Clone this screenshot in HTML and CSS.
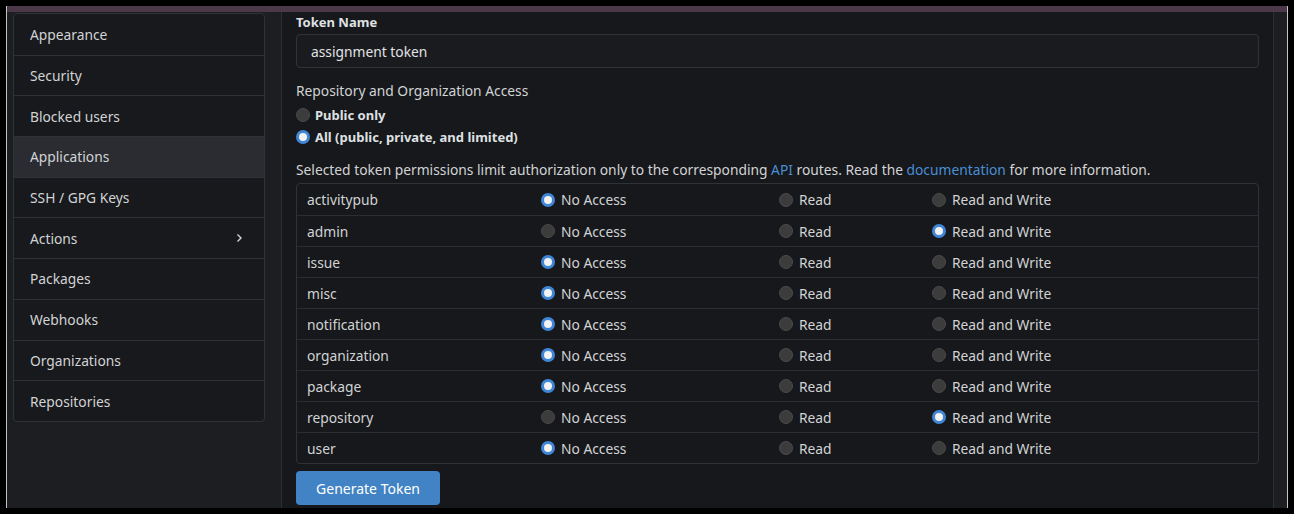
FILE: index.html
```html
<!DOCTYPE html>
<html lang="en">
<head>
<meta charset="utf-8">
<title>Applications</title>
<link rel="stylesheet" href="styles.css">
</head>
<body>
<div class="frame">
  <div class="topbar"></div>
  <div class="page">
    <aside class="side">
      <nav class="menu">
        <a class="item">Appearance</a>
        <a class="item">Security</a>
        <a class="item">Blocked users</a>
        <a class="item active">Applications</a>
        <a class="item">SSH / GPG Keys</a>
        <a class="item">Actions <svg class="chev" width="10" height="10" viewBox="0 0 10 10"><path d="M3.5 1.5 L7 5 L3.5 8.5" fill="none" stroke="#d4d4d4" stroke-width="1.4"/></svg></a>
        <a class="item">Packages</a>
        <a class="item">Webhooks</a>
        <a class="item">Organizations</a>
        <a class="item">Repositories</a>
      </nav>
    </aside>
    <main class="main">
      <label class="field-label">Token Name</label>
      <div class="input">assignment token</div>
      <div class="heading">Repository and Organization Access</div>
      <div class="choices">
        <label class="choice"><input type="radio" name="scope"> Public only</label>
        <label class="choice"><input type="radio" name="scope" checked> All (public, private, and limited)</label>
      </div>
      <p class="help">Selected token permissions limit authorization only to the corresponding <a>API</a> routes. Read the <a>documentation</a> for more information.</p>
      <div class="perms">
        <div class="row"><span class="name">activitypub</span><label><input type="radio" name="p1" checked> No Access</label><label><input type="radio" name="p1"> Read</label><label><input type="radio" name="p1"> Read and Write</label></div>
        <div class="row"><span class="name">admin</span><label><input type="radio" name="p2"> No Access</label><label><input type="radio" name="p2"> Read</label><label><input type="radio" name="p2" checked> Read and Write</label></div>
        <div class="row"><span class="name">issue</span><label><input type="radio" name="p3" checked> No Access</label><label><input type="radio" name="p3"> Read</label><label><input type="radio" name="p3"> Read and Write</label></div>
        <div class="row"><span class="name">misc</span><label><input type="radio" name="p4" checked> No Access</label><label><input type="radio" name="p4"> Read</label><label><input type="radio" name="p4"> Read and Write</label></div>
        <div class="row"><span class="name">notification</span><label><input type="radio" name="p5" checked> No Access</label><label><input type="radio" name="p5"> Read</label><label><input type="radio" name="p5"> Read and Write</label></div>
        <div class="row"><span class="name">organization</span><label><input type="radio" name="p6" checked> No Access</label><label><input type="radio" name="p6"> Read</label><label><input type="radio" name="p6"> Read and Write</label></div>
        <div class="row"><span class="name">package</span><label><input type="radio" name="p7" checked> No Access</label><label><input type="radio" name="p7"> Read</label><label><input type="radio" name="p7"> Read and Write</label></div>
        <div class="row"><span class="name">repository</span><label><input type="radio" name="p8"> No Access</label><label><input type="radio" name="p8"> Read</label><label><input type="radio" name="p8" checked> Read and Write</label></div>
        <div class="row"><span class="name">user</span><label><input type="radio" name="p9" checked> No Access</label><label><input type="radio" name="p9"> Read</label><label><input type="radio" name="p9"> Read and Write</label></div>
      </div>
      <button class="btn">Generate Token</button>
    </main>
  </div>
</div>
</body>
</html>
```
FILE: styles.css
```css
* { box-sizing: border-box; }
html, body { margin: 0; padding: 0; }
body {
  background: #000;
  width: 1294px;
  height: 514px;
  overflow: hidden;
  font-family: "Noto Sans", "Open Sans", sans-serif;
  font-size: 13.8px;
  color: #d2d3d5;
}
.frame {
  margin: 6px 0 0 6px;
  width: 1282px;
  height: 502px;
  border-left: 1px solid #c4c4c4;
  border-right: 1px solid #c4c4c4;
  background: #1c1e22;
  display: flex;
  flex-direction: column;
  overflow: hidden;
}
.topbar { height: 6px; background: #4b3849; flex: none; }
.page { flex: 1; display: flex; min-height: 0; }
.side { width: 274px; flex: none; padding: 1px 16px 0 6px; }
.menu {
  border: 1px solid #2f3237;
  border-radius: 4px;
  background: #17191c;
  overflow: hidden;
}
.item {
  display: flex;
  align-items: center;
  justify-content: space-between;
  height: 40.7px;
  padding: 0 20px 0 16px;
  color: #d2d3d5;
  border-top: 1px solid #2f3237;
}
.item:first-child { border-top: none; }
.item.active { background: #2a2c31; }
.chev { display: block; }
.main {
  width: 993px;
  flex: none;
  background: #16181b;
  border-left: 1px solid #2b2e33;
  border-right: 1px solid #2b2e33;
  padding: 1px 14px 0 14px;
  overflow: hidden;
}
.field-label {
  display: block;
  font-weight: 700;
  font-size: 13px;
  line-height: 18px;
  color: #dfe0e2;
}
.input {
  margin-top: 3px;
  height: 34px;
  border: 1px solid #2f3338;
  border-radius: 4px;
  background: #191b1f;
  padding: 0 14px;
  display: flex;
  align-items: center;
  color: #e2e3e5;
}
.heading { margin-top: 13px; line-height: 20px; }
.choices { margin-top: 3px; }
.choice {
  display: flex;
  align-items: center;
  gap: 5px;
  height: 22px;
  font-weight: 700;
  font-size: 13px;
  color: #dfe0e2;
}
.help { margin: 12px 0 0; line-height: 20px; }
.help a { color: #4a8fd6; }
input[type=radio] {
  appearance: none;
  -webkit-appearance: none;
  margin: 0;
  width: 14px;
  height: 14px;
  border-radius: 50%;
  background: #3c3c3c;
  border: 1px solid #4a4a4a;
  flex: none;
}
input[type=radio]:checked {
  background: #f2f2f2;
  border: 3.5px solid #3f86d6;
}
.perms {
  margin-top: 3px;
  border: 1px solid #2f3338;
  border-radius: 4px;
}
.row {
  display: grid;
  grid-template-columns: 234px 238px 153px 1fr;
  align-items: center;
  height: 31px;
  padding-left: 10px;
  border-top: 1px solid #2a2d31;
}
.row:first-child { border-top: none; }
.row label { display: flex; align-items: center; gap: 6px; }
.btn {
  margin-top: 7px;
  width: 144px;
  height: 34px;
  border: none;
  border-radius: 4px;
  background: #4183c4;
  color: #fff;
  font-family: inherit;
  font-size: 14px;
}
```
